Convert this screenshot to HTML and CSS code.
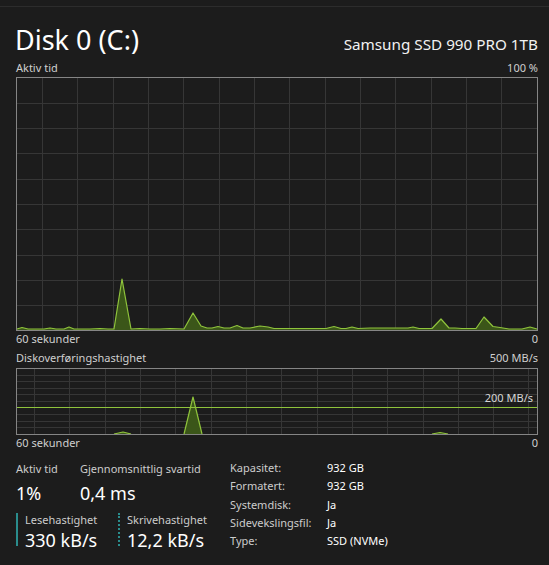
FILE: index.html
```html
<!DOCTYPE html>
<html lang="no">
<head>
<meta charset="utf-8">
<title>Disk 0 (C:)</title>
<link rel="stylesheet" href="styles.css">
</head>
<body>
<div class="topbar"></div>
<div class="page">
  <header class="header">
    <h1 class="title">Disk 0 (C:)</h1>
    <div class="model">Samsung SSD 990 PRO 1TB</div>
  </header>

  <div class="axis axis-top"><span>Aktiv tid</span><span>100 %</span></div>
  <svg class="chart chart-main" width="522" height="254" viewBox="0 0 522 254">
    <g class="grid">
      <line x1="26.5" y1="0" x2="26.5" y2="254"/><line x1="61.5" y1="0" x2="61.5" y2="254"/>
      <line x1="97.5" y1="0" x2="97.5" y2="254"/><line x1="132.5" y1="0" x2="132.5" y2="254"/>
      <line x1="167.5" y1="0" x2="167.5" y2="254"/><line x1="203.5" y1="0" x2="203.5" y2="254"/>
      <line x1="238.5" y1="0" x2="238.5" y2="254"/><line x1="273.5" y1="0" x2="273.5" y2="254"/>
      <line x1="309.5" y1="0" x2="309.5" y2="254"/><line x1="344.5" y1="0" x2="344.5" y2="254"/>
      <line x1="379.5" y1="0" x2="379.5" y2="254"/><line x1="415.5" y1="0" x2="415.5" y2="254"/>
      <line x1="450.5" y1="0" x2="450.5" y2="254"/><line x1="485.5" y1="0" x2="485.5" y2="254"/>
      <line x1="0" y1="26.5" x2="522" y2="26.5"/><line x1="0" y1="51.5" x2="522" y2="51.5"/>
      <line x1="0" y1="76.5" x2="522" y2="76.5"/><line x1="0" y1="102.5" x2="522" y2="102.5"/>
      <line x1="0" y1="127.5" x2="522" y2="127.5"/><line x1="0" y1="152.5" x2="522" y2="152.5"/>
      <line x1="0" y1="178.5" x2="522" y2="178.5"/><line x1="0" y1="203.5" x2="522" y2="203.5"/>
      <line x1="0" y1="228.5" x2="522" y2="228.5"/>
    </g>
    <polygon class="area" points="1,253 1,252 6,250.5 12,252 28,252 34,251 40,252 48,252 53,250 58,252 74,252 84,251.5 92,252 98,252 106,202 115,252 124,251.5 134,252 144,252 154,251.5 168,252 177,236 185,249 191,251 196,251 202,249.5 208,251 214,251 221,248.5 227,251 234,251 244,249 252,250 258,251.5 269,251.5 284,251.5 302,251.5 310,251.5 318,249.5 325,251.5 330,251.5 336,250 342,251.5 354,251 364,251 384,251 392,251 397,250 403,251.5 416,251.5 425,242 433,251 439,251 446,251.5 460,251.5 468,240 477,249.5 484,250.5 493,252 506,252 514,250 521,252 521,253"/>
    <polyline class="line" points="1,252 6,250.5 12,252 28,252 34,251 40,252 48,252 53,250 58,252 74,252 84,251.5 92,252 98,252 106,202 115,252 124,251.5 134,252 144,252 154,251.5 168,252 177,236 185,249 191,251 196,251 202,249.5 208,251 214,251 221,248.5 227,251 234,251 244,249 252,250 258,251.5 269,251.5 284,251.5 302,251.5 310,251.5 318,249.5 325,251.5 330,251.5 336,250 342,251.5 354,251 364,251 384,251 392,251 397,250 403,251.5 416,251.5 425,242 433,251 439,251 446,251.5 460,251.5 468,240 477,249.5 484,250.5 493,252 506,252 514,250 521,252"/>
    <rect class="frame" x="0.5" y="0.5" width="521" height="253"/>
  </svg>
  <div class="axis axis-bottom"><span>60 sekunder</span><span>0</span></div>

  <div class="axis axis-top2"><span>Diskoverføringshastighet</span><span>500 MB/s</span></div>
  <div class="chart-wrap">
    <svg class="chart chart-rate" width="522" height="67" viewBox="0 0 522 67">
      <g class="grid">
        <line x1="18.5" y1="0" x2="18.5" y2="67"/><line x1="53.5" y1="0" x2="53.5" y2="67"/>
        <line x1="89.5" y1="0" x2="89.5" y2="67"/><line x1="124.5" y1="0" x2="124.5" y2="67"/>
        <line x1="159.5" y1="0" x2="159.5" y2="67"/><line x1="195.5" y1="0" x2="195.5" y2="67"/>
        <line x1="230.5" y1="0" x2="230.5" y2="67"/><line x1="265.5" y1="0" x2="265.5" y2="67"/>
        <line x1="301.5" y1="0" x2="301.5" y2="67"/><line x1="336.5" y1="0" x2="336.5" y2="67"/>
        <line x1="371.5" y1="0" x2="371.5" y2="67"/><line x1="407.5" y1="0" x2="407.5" y2="67"/>
        <line x1="442.5" y1="0" x2="442.5" y2="67"/><line x1="477.5" y1="0" x2="477.5" y2="67"/>
        <line x1="512.5" y1="0" x2="512.5" y2="67"/>
        <line x1="0" y1="7.5" x2="522" y2="7.5"/><line x1="0" y1="13.5" x2="522" y2="13.5"/>
        <line x1="0" y1="20.5" x2="522" y2="20.5"/><line x1="0" y1="26.5" x2="522" y2="26.5"/>
        <line x1="0" y1="33.5" x2="522" y2="33.5"/><line x1="0" y1="46.5" x2="522" y2="46.5"/>
        <line x1="0" y1="53.5" x2="522" y2="53.5"/><line x1="0" y1="59.5" x2="522" y2="59.5"/>
      </g>
      <polygon class="area" points="98,66 107,64 115,66"/>
      <polygon class="area" points="168,66 177,29 186,66"/>
      <polygon class="area" points="416,66 424,64.5 432,66"/>
      <polyline class="line" points="98,66 107,64 115,66"/>
      <polyline class="line" points="168,66 177,29 186,66"/>
      <polyline class="line" points="416,66 424,64.5 432,66"/>
      <line class="limit" x1="0" y1="39.5" x2="522" y2="39.5"/>
      <rect class="frame" x="0.5" y="0.5" width="521" height="66"/>
    </svg>
    <span class="limit-label">200 MB/s</span>
  </div>
  <div class="axis axis-bottom"><span>60 sekunder</span><span>0</span></div>

  <section class="stats">
    <div class="stats-left">
      <div class="stat-row">
        <div class="stat stat-active">
          <div class="stat-label">Aktiv tid</div>
          <div class="stat-value">1%</div>
        </div>
        <div class="stat">
          <div class="stat-label">Gjennomsnittlig svartid</div>
          <div class="stat-value">0,4 ms</div>
        </div>
      </div>
      <div class="stat-row stat-row-speed">
        <div class="speed speed-read">
          <div class="stat-label">Lesehastighet</div>
          <div class="stat-value">330 kB/s</div>
        </div>
        <div class="speed speed-write">
          <div class="stat-label">Skrivehastighet</div>
          <div class="stat-value">12,2 kB/s</div>
        </div>
      </div>
    </div>
    <dl class="props">
      <dt>Kapasitet:</dt><dd>932 GB</dd>
      <dt>Formatert:</dt><dd>932 GB</dd>
      <dt>Systemdisk:</dt><dd>Ja</dd>
      <dt>Sidevekslingsfil:</dt><dd>Ja</dd>
      <dt>Type:</dt><dd>SSD (NVMe)</dd>
    </dl>
  </section>
</div>
</body>
</html>
```
FILE: styles.css
```css
* { box-sizing: border-box; }
html, body {
  margin: 0;
  padding: 0;
  background: #1c1c1c;
  color: #ffffff;
  font-family: "Noto Sans", "Open Sans", "Liberation Sans", sans-serif;
  width: 549px;
  height: 565px;
  overflow: hidden;
}
.topbar {
  height: 7px;
  border-bottom: 1px solid #2c2c2c;
}
.page {
  padding: 0 11px 0 16px;
}
.header {
  display: flex;
  justify-content: space-between;
  align-items: baseline;
  padding-top: 17px;
  margin-bottom: 6px;
}
.title {
  margin: 0 0 0 -1px;
  font-size: 27px;
  line-height: 31px;
  font-weight: 400;
  color: #ffffff;
}
.model {
  font-size: 15.25px;
  color: #f2f2f2;
}
.axis {
  display: flex;
  justify-content: space-between;
  font-size: 11px;
  line-height: 14px;
  color: #cfcfcf;
}
.axis-top { margin-bottom: 2px; }
.axis-bottom { margin-top: 1px; }
.axis-top2 { margin-top: 5px; margin-bottom: 3px; }
.chart { display: block; }
.grid line { stroke: #363636; stroke-width: 1; }
.frame { fill: none; stroke: #858585; stroke-width: 1; }
.area { fill: #3b5619; stroke: none; }
.line { fill: none; stroke: #8fc33c; stroke-width: 1.2; stroke-linejoin: round; }
.limit { stroke: #8fc33c; stroke-width: 1; }
.chart-wrap { position: relative; }
.limit-label {
  position: absolute;
  right: 5px;
  top: 23px;
  font-size: 11px;
  line-height: 14px;
  color: #d6d6d6;
}
.stats {
  display: flex;
  margin-top: 9px;
}
.stats-left {
  width: 214px;
}
.stat-row {
  display: flex;
  gap: 18px;
}
.stat-active { width: 46px; }
.stat-label {
  font-size: 11px;
  line-height: 20px;
  color: #cccccc;
  white-space: nowrap;
}
.stat-value {
  font-size: 18px;
  line-height: 28px;
  color: #ffffff;
  white-space: nowrap;
}
.stat-row-speed {
  margin-top: 6px;
  gap: 0;
}
.speed {
  height: 33px;
  padding-left: 7px;
}
.speed .stat-label { line-height: 14px; }
.speed .stat-value { line-height: 20px; margin-top: 3px; }
.speed-read {
  width: 102px;
  border-left: 2px solid #2a8d8d;
}
.speed-write {
  border-left: 2px dotted #2a8d8d;
}
.props {
  margin: 0;
  display: grid;
  grid-template-columns: 97px auto;
  font-size: 11px;
  line-height: 18.25px;
}
.props dt { color: #cccccc; }
.props dd { margin: 0; color: #ffffff; }
```
